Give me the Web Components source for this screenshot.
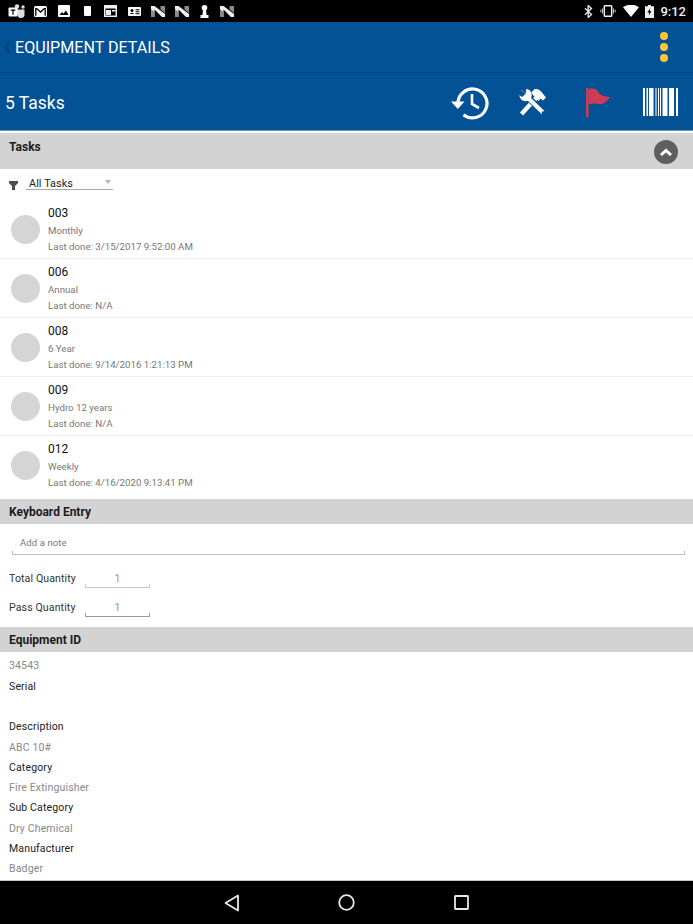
<!DOCTYPE html>
<html><head><meta charset="utf-8"><style>
html,body{margin:0;padding:0;background:#fff}
body{width:693px;height:924px;overflow:hidden;font-family:Roboto,"Liberation Sans",sans-serif;display:flex;flex-direction:column}
main{flex:1;display:block;overflow:hidden}
</style></head><body>
<status-bar></status-bar>
<app-bar></app-bar>
<tool-bar></tool-bar>
<main>
<section-head tall collapse>Tasks</section-head>
<filter-row></filter-row>
<task-row code="003" kind="Monthly" last="Last done: 3/15/2017 9:52:00 AM"></task-row>
<task-row code="006" kind="Annual" last="Last done: N/A"></task-row>
<task-row code="008" kind="6 Year" last="Last done: 9/14/2016 1:21:13 PM"></task-row>
<task-row code="009" kind="Hydro 12 years" last="Last done: N/A"></task-row>
<task-row code="012" kind="Weekly" last="Last done: 4/16/2020 9:13:41 PM" end></task-row>
<section-head>Keyboard Entry</section-head>
<note-field></note-field>
<qty-row label="Total Quantity" value="1"></qty-row>
<qty-row label="Pass Quantity" value="1" dark></qty-row>
<section-head>Equipment ID</section-head>
<detail-list>
<detail-line value>34543</detail-line>
<detail-line>Serial</detail-line>
<detail-line value></detail-line>
<detail-line>Description</detail-line>
<detail-line value>ABC 10#</detail-line>
<detail-line>Category</detail-line>
<detail-line value>Fire Extinguisher</detail-line>
<detail-line>Sub Category</detail-line>
<detail-line value>Dry Chemical</detail-line>
<detail-line>Manufacturer</detail-line>
<detail-line value>Badger</detail-line>
</detail-list>
</main>
<nav-bar></nav-bar>
<script>
function def(name,html){customElements.define(name,class extends HTMLElement{constructor(){super();this.attachShadow({mode:'open'})}connectedCallback(){this.shadowRoot.innerHTML=typeof html==='function'?html(this):html;}})}
const N='<svg width="14" height="13" viewBox="0 0 14 13"><path d="M0 1h3.500L14 9v3h-3L3.500 4.500V12H0z" fill="#f2f2f2"/><path d="M9.500 1H14v7L9.500 4.500zM0 12V4l3.500 3v5z" fill="#8a8a8a"/></svg>';
def('status-bar',`<style>:host{display:flex;align-items:center;height:22px;background:#000;flex:none;color:#eee;font-size:13px;font-weight:500;padding:0 7px 0 8px;box-sizing:border-box}
.l{display:flex;align-items:center}.l>*{flex:none}.r{margin-left:auto;display:flex;align-items:center}svg{display:block}</style>
<div class="l">
<svg width="18" height="14" viewBox="0 0 18 14" style="margin-right:8px"><circle cx="9" cy="2.500" r="2.200" fill="#ddd"/><circle cx="15" cy="3" r="1.700" fill="#ddd"/><path d="M7 5.500h9.500v4.500a3.500 3.500 0 0 1-7 1z" fill="#ddd"/><rect x="0.500" y="3.500" width="9" height="9" rx="1" fill="#fff"/><path d="M2.700 5.500h4.600v1.200H5.600v4H4.400v-4H2.700z" fill="#000"/></svg>
<svg width="13" height="11" viewBox="0 0 13 11" style="margin-right:11px"><rect width="13" height="11" rx="1.500" fill="#fff"/><path d="M1.800 9.800V2.600h1L6.500 6l3.700-3.400h1v7.200" fill="none" stroke="#000" stroke-width="1.300"/></svg>
<svg width="12" height="12" viewBox="0 0 12 12" style="margin-right:14px"><rect width="12" height="12" rx="1" fill="#fff"/><path d="M1.500 10l2.500-3 1.500 1.500L8 5.500l2.500 4.500z" fill="#000"/></svg>
<svg width="7" height="10" viewBox="0 0 7 10" style="margin-right:13px"><rect width="7" height="10" rx="1" fill="#fff"/></svg>
<svg width="13" height="12" viewBox="0 0 13 12" style="margin-right:11px"><path d="M0 0h13v12H0z" fill="#eee"/><path d="M1.500 3.500h10v7h-10z" fill="#000"/><path d="M2 5h5v5H2z" fill="#eee"/><path d="M8 5h3.500v1.500H8z" fill="#eee"/></svg>
<svg width="13" height="9" viewBox="0 0 13 9" style="margin-right:10px"><rect width="13" height="9" rx="1" fill="#fff"/><circle cx="4" cy="3.500" r="1.500" fill="#000"/><path d="M1.800 7c.5-1.500 4-1.500 4.400 0zM7.500 2.200h4v1h-4zM7.500 4.200h4v1h-4zM7.500 6.200h4v1h-4z" fill="#000"/></svg>
<span style="margin-right:10px;display:flex">${N}</span>
<span style="margin-right:11px;display:flex">${N}</span>
<svg width="9" height="13" viewBox="0 0 9 13" style="margin-right:11px"><circle cx="4.500" cy="2.800" r="2.800" fill="#fff"/><path d="M3 4h3l.5 6H8.500v3H.5v-3h2z" fill="#fff"/></svg>
<span style="display:flex">${N}</span>
</div>
<div class="r">
<svg width="9" height="13" viewBox="0 0 9 13" style="margin-right:7px"><path d="M1 3.300l6.500 6.200L4.200 12.500V.5l3.300 3L1 9.700" fill="none" stroke="#eee" stroke-width="1.300"/></svg>
<svg width="16" height="12" viewBox="0 0 16 12" style="margin-right:7px"><rect x="4.300" y=".7" width="7.400" height="10.600" rx="1" fill="none" stroke="#eee" stroke-width="1.500"/><path d="M2.500 3.500v5M.8 4.800v2.400M13.500 3.500v5M15.200 4.800v2.400" stroke="#bbb" stroke-width="1.100"/></svg>
<svg width="16" height="12" viewBox="0 0 16 12" style="margin-right:6px"><path d="M0 2.300C4.500-1 11.500-1 16 2.300L8 12z" fill="#fff"/></svg>
<svg width="9" height="13" viewBox="0 0 9 13" style="margin-right:6px"><path d="M3 0h3v1.200H9V13H0V1.200h3z" fill="#eee"/><path d="M5.200 3.200L2.400 7.500h1.800L3.600 10.500 6.500 6.200H4.700z" fill="#000"/></svg>
<span>9:12</span>
</div>`);
def('app-bar',`<style>:host{display:flex;align-items:center;height:50px;background:#035296;flex:none;border-bottom:1px solid #03467f;color:#fff}
.b{margin:0 3px 0 3px;display:flex}
.t{font-size:16.100px;line-height:52px;height:50px}
.m{margin-left:auto;margin-right:25px;display:flex;flex-direction:column;gap:3px}
.m i{display:block;width:8px;height:8px;border-radius:50%;background:#fdc435}</style>
<span class="b"><svg width="9" height="13" viewBox="0 0 9 13"><path d="M6.500 1L2.500 6.500 6.500 12" fill="none" stroke="#023e73" stroke-width="2"/></svg></span>
<span class="t">EQUIPMENT DETAILS</span>
<span class="m"><i></i><i></i><i></i></span>`);
def('tool-bar',`<style>:host{display:flex;align-items:center;height:58px;background:#035296;flex:none;color:#fff;border-bottom:2px solid #fff;box-shadow:inset 0 -1px 0 #6f8fb8}
.t{font-size:17.500px;margin-left:5px;line-height:60px;height:58px}
.i{margin-left:auto;display:flex;align-items:center;margin-right:15px}svg{display:block}</style>
<span class="t">5 Tasks</span>
<span class="i">
<svg width="39" height="35" viewBox="0 0 39 35" style="margin-right:29px"><path d="M7 18.500a14.500 14.500 0 1 1 5.500 11.300" fill="none" stroke="#fff" stroke-width="3.200"/><path d="M0 16.500h13.500L6.800 24z" fill="#fff"/><path d="M21 9v10l7 4" fill="none" stroke="#fff" stroke-width="2.600"/></svg>
<svg width="28" height="28" viewBox="0 0 28 28" style="margin-right:39px">
<path d="M2.500 26L17.500 9.500" stroke="#fff" stroke-width="4.200" fill="none"/>
<path d="M12.500 4.500L15.500 1c3-.5 5 .5 7 3l4.500 5.500-3 3-2.500-2-2 2.500-5.500-6z" fill="#fff"/>
<path d="M9.500 10L25 25" stroke="#035296" stroke-width="6.400" fill="none"/>
<path d="M8 9L24 24.500" stroke="#fff" stroke-width="4.200" fill="none"/>
<circle cx="6.500" cy="7" r="6.200" fill="#fff"/>
<path d="M0 0L6.500 6 3 9 0 7zM1 0h6.500L6.500 6z" fill="#035296"/>
<circle cx="24" cy="24.500" r="1.200" fill="#035296"/></svg>
<svg width="26" height="29" viewBox="0 0 26 29" style="margin-right:31px"><rect x="0" y="0" width="2.500" height="29" fill="#cf3a55"/><path d="M2.500 1c4-1 6.500-.5 9 1.500 1.500 3.500 5 6 12.500 6.500-2 3-4.500 6-8.500 7-3 .7-6-.7-7.500-.5-2 .2-4 .7-5.500.7z" fill="#cf3a55"/></svg>
<svg width="35" height="28" viewBox="0 0 35 28"><path fill="#fff" d="M0 0h2v28H0zM3.500 0h1.500v28H3.500zM6 0h4.500v28H6zM12.500 0h1v28h-1zM15 0h1v28h-1zM17 0h1v28h-1zM19.500 0h5v28h-5zM26 0h5v28h-5zM33 0h2v28h-2z"/></svg>
</span>`);
def('section-head',h=>{const t=h.hasAttribute('tall');return `<style>:host{display:flex;background:#d3d3d3;color:#1c1c1c;font-size:12px;font-weight:700;height:${t?36:25}px;padding:0 15px 0 9px;line-height:${t?28:26}px;box-sizing:border-box}
.c{margin-left:auto;margin-top:7px;width:24px;height:24px;border-radius:50%;background:#5f5f5f;display:flex;align-items:center;justify-content:center}</style>
<slot></slot>${h.hasAttribute('collapse')?`<span class="c"><svg width="14" height="9" viewBox="0 0 14 9"><path d="M2 7l5-4.500L12 7" fill="none" stroke="#fff" stroke-width="3"/></svg></span>`:''}`});
def('filter-row',`<style>:host{display:flex;height:31px;align-items:flex-start;padding:0 0 0 9px;box-sizing:border-box}
svg{margin-top:12px;display:block}
.s{margin:8px 0 0 8px;width:87px;height:13px;border-bottom:1px solid #a9a9a9;padding:0 0 0 3px;font-size:10.800px;line-height:14px;color:#222;letter-spacing:.1px;display:flex;justify-content:space-between;box-sizing:border-box}
.a{width:0;height:0;border:3.500px solid transparent;border-top:4px solid #b5b5b5;border-bottom:0;margin:3px 2px 0 0}</style>
<svg width="9" height="9" viewBox="0 0 9 9"><path d="M0 0h9v2L6 5v4H3V5L0 2z" fill="#4d4d4d"/></svg>
<div class="s"><span>All Tasks</span><span class="a"></span></div>`);
def('task-row',h=>`<style>:host{display:flex;height:${h.hasAttribute('end')?63:59}px;box-sizing:border-box;align-items:flex-start;${h.hasAttribute('end')?'':'border-bottom:1px solid #f1f1f1;'}}
.d{width:29px;height:29px;border-radius:50%;background:#d5d5d5;margin:15px 0 0 11px;flex:none}
.x{margin-left:8px;padding-top:5px}
.a{font-size:12px;line-height:16px;color:#111}
.b{font-size:9.700px;line-height:16.500px;color:#777}.a+.b{margin-top:2px}.b+.b{margin-top:-.5px}</style>
<div class="d"></div><div class="x"><div class="a">${h.getAttribute('code')}</div><div class="b">${h.getAttribute('kind')}</div><div class="b">${h.getAttribute('last')}</div></div>`);
def('note-field',`<style>:host{display:block;height:40px;padding:11px 8px 0 12px;box-sizing:border-box}
.f{height:19px;border:solid #bdbdbd;border-width:0 1px 1px 1px;border-image:linear-gradient(transparent 80%,#bdbdbd 80%) 1;font-size:9.500px;line-height:16px;color:#777;padding-left:7px;letter-spacing:.1px}</style>
<div class="f">Add a note</div>`);
def('qty-row',h=>{const c=h.hasAttribute('dark')?'#9a9a9a':'#c9c9c9';return `<style>:host{display:flex;height:${h.hasAttribute('dark')?34:29}px;padding-left:9px;box-sizing:border-box;font-size:10.600px;line-height:30px;color:#333}
.l{width:76px;letter-spacing:.1px}.v{width:65px;height:21px;box-sizing:border-box;margin-top:3px;line-height:23px;text-align:center;color:#8794a0;font-size:10.500px;border-bottom:1px solid ${c};position:relative}
.v:before,.v:after{content:"";position:absolute;bottom:0;width:1px;height:3px;background:${c}}.v:before{left:0}.v:after{right:0}</style>
<span class="l">${h.getAttribute('label')}</span><span class="v">${h.getAttribute('value')}</span>`});
def('detail-list',`<style>:host{display:block;padding-top:4.400px}</style><slot></slot>`);
def('detail-line',h=>`<style>:host{display:block;height:20.300px;line-height:20.300px;padding-left:9px;font-size:10.500px;letter-spacing:.15px;color:${h.hasAttribute('value')?'#888':'#222'}}</style><slot></slot>`);
def('nav-bar',`<style>:host{display:flex;height:44px;background:#000;flex:none;border-top:1px solid #c8c8c8;box-sizing:border-box;justify-content:center;align-items:center}
svg{display:block}</style>
<svg width="16" height="18" viewBox="0 0 16 18" style="margin-right:98px;margin-left:-1px"><path d="M14 1.500v15L1.500 9z" fill="none" stroke="#e8e8e8" stroke-width="1.800" stroke-linejoin="round"/></svg>
<svg width="17" height="17" viewBox="0 0 17 17" style="margin-right:99px"><circle cx="8.500" cy="8.500" r="7.300" fill="none" stroke="#e8e8e8" stroke-width="1.800"/></svg>
<svg width="15" height="15" viewBox="0 0 15 15"><rect x="1" y="1" width="13" height="13" rx=".5" fill="none" stroke="#e8e8e8" stroke-width="1.800"/></svg>`);
</script>
</body></html>
